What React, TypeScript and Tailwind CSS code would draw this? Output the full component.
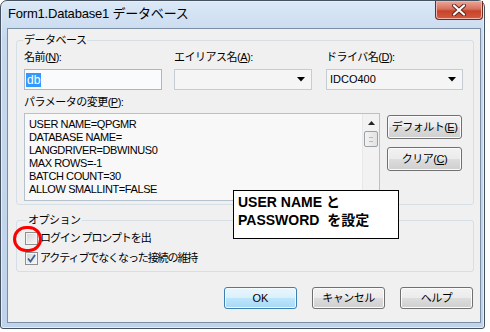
const jp = "font-['Liberation_Sans','Noto_Sans_CJK_JP',sans-serif]";

function Btn({ label, className = "" }: { label: React.ReactNode; className?: string }) {
  return (
    <div
      className={`flex items-center justify-center rounded-[3px] border border-[#707070] bg-[linear-gradient(#f2f2f2_0%,#ebebeb_50%,#dddddd_50%,#cfcfcf_100%)] shadow-[inset_0_0_0_1px_#fbfbfb] text-[11px] tracking-[-0.5px] text-black ${jp} ${className}`}
    >
      {label}
    </div>
  );
}

function Acc({ k }: { k: string }) {
  return <span className="underline">{k}</span>;
}

function Check({ checked }: { checked?: boolean }) {
  return (
    <div className="flex h-[13px] w-[13px] shrink-0 items-center justify-center border border-[#8f8f8f] bg-[linear-gradient(135deg,#d6d6d6,#f8f8f8)] shadow-[inset_0_0_0_1px_#f4f4f4]">
      {checked && (
        <svg width="9" height="9" viewBox="0 0 9 9">
          <path d="M1 4.5 L3.5 7.5 L8 1" fill="none" stroke="#3f5d96" strokeWidth="1.8" />
        </svg>
      )}
    </div>
  );
}

function Combo({ value }: { value?: string }) {
  return (
    <div className="flex h-[21px] items-center justify-between border border-[#c6ccd4] bg-[#f5f5f5] pl-[3px] pr-[6px]">
      <span className="font-['Liberation_Sans',sans-serif] text-[11px] text-black">{value}</span>
      <svg width="8" height="5" viewBox="0 0 8 5">
        <path d="M0 0 H8 L4 4.5 Z" fill="#000" />
      </svg>
    </div>
  );
}

const params = [
  "USER NAME=QPGMR",
  "DATABASE NAME=",
  "LANGDRIVER=DBWINUS0",
  "MAX ROWS=-1",
  "BATCH COUNT=30",
  "ALLOW SMALLINT=FALSE",
];

export default function App() {
  return (
    <div className="relative h-[332px] w-[490px] bg-white">
      <div className="flex h-[329px] w-[485px] flex-col rounded-t-[7px] rounded-b-[3px] border border-[#46525f] bg-[linear-gradient(180deg,#dbe8f6_0%,#c5d8ee_12%,#bfd3ea_100%)] pl-[6px] shadow-[inset_0_0_0_1px_#e6eef8]">
        {/* title bar */}
        <div className="flex h-[27px] items-start justify-between">
          <div className={`mt-[4px] ml-[1px] text-[13px] leading-[18px] tracking-[-0.2px] text-black ${jp}`}>
            Form1.Database1 データベース
          </div>
          <div className="mr-[1px] flex h-[19px] w-[48px] items-center justify-center rounded-b-[4px] border border-t-0 border-[#6e2b22] bg-[linear-gradient(180deg,#e9a79a_0%,#d8705c_45%,#c7432c_55%,#d65b3d_100%)] shadow-[inset_0_0_0_1px_#f0b8ac]">
            <svg width="16" height="12" viewBox="0 0 16 12">
              <path d="M3 1.5 L13 10.5 M13 1.5 L3 10.5" stroke="#5a2119" strokeWidth="4" strokeLinecap="round" />
              <path d="M3 1.5 L13 10.5 M13 1.5 L3 10.5" stroke="#ffffff" strokeWidth="2.2" strokeLinecap="round" />
            </svg>
          </div>
        </div>

        {/* client */}
        <div className="flex h-[295px] w-[474px] flex-col border border-[#7c8ea3] bg-[#f0f0f0]">
          <fieldset className="mt-[5px] ml-[8px] h-[171px] w-[458px] rounded-[3px] border border-[#d5dfe5] px-[7px]">
            <legend className={`px-[1px] -ml-[1px] text-[11px] leading-[12px] tracking-[-0.5px] text-black ${jp}`}>データベース</legend>
            <div className="mt-[4px] flex">
              <div className="w-[138px]">
                <div className={`h-[14px] text-[11px] leading-[14px] tracking-[-0.5px] ${jp}`}>
                  名前(<Acc k="N" />):
                </div>
                <div className="mt-[5px] flex h-[21px] items-center border border-[#abb7c4] bg-[#fafbfc] px-[1px]">
                  <span className="bg-[#3399ff] px-[1px] font-['Liberation_Sans',sans-serif] text-[12px] leading-[14px] text-white">db</span>
                </div>
              </div>
              <div className="ml-[12px] w-[138px]">
                <div className={`h-[14px] text-[11px] leading-[14px] tracking-[-0.5px] ${jp}`}>
                  エイリアス名(<Acc k="A" />):
                </div>
                <div className="mt-[5px]">
                  <Combo />
                </div>
              </div>
              <div className="ml-[14px] w-[137px]">
                <div className={`h-[14px] text-[11px] leading-[14px] tracking-[-0.5px] ${jp}`}>
                  ドライバ名(<Acc k="D" />):
                </div>
                <div className="mt-[5px]">
                  <Combo value="IDCO400" />
                </div>
              </div>
            </div>
            <div className={`mt-[5px] h-[14px] text-[11px] leading-[14px] tracking-[-0.5px] ${jp}`}>
              パラメータの変更(<Acc k="P" />):
            </div>
            <div className="mt-[4px] flex">
              <div className="flex h-[88px] w-[356px] border border-[#b5c1cd] bg-[#f8f8f8]">
                <div className="flex-1 pt-[4px] pl-[4px] font-['Liberation_Sans',sans-serif] text-[11px] leading-[13px] tracking-[-0.4px] text-black">
                  {params.map((p) => (
                    <div key={p}>{p}</div>
                  ))}
                </div>
                <div className="flex w-[17px] flex-col items-center border-l border-[#e8e8e8] bg-[#f2f2f2]">
                  <div className="flex h-[17px] items-center justify-center">
                    <svg width="7" height="4" viewBox="0 0 7 4">
                      <path d="M0 4 L3.5 0 L7 4 Z" fill="#222" />
                    </svg>
                  </div>
                  <div className="flex h-[16px] w-[14px] items-center justify-center rounded-[2px] border border-[#9aa0a6] bg-[linear-gradient(90deg,#f3f3f3,#e2e2e2)]">
                    <div className="h-[5px] w-[4px] border-y border-[#b8b8b8]" />
                  </div>
                </div>
              </div>
              <div className="ml-[7px] mt-[2px] flex flex-col gap-[8px]">
                <Btn className="h-[24px] w-[75px]" label={<>デフォルト(<Acc k="E" />)</>} />
                <Btn className="h-[24px] w-[75px]" label={<>クリア(<Acc k="C" />)</>} />
              </div>
            </div>
          </fieldset>

          <fieldset className="mt-[9px] ml-[8px] w-[458px] rounded-[3px] border border-[#d5dfe5] px-[8px] pb-[5px]">
            <legend className={`ml-[2px] px-[1px] text-[11px] leading-[12px] tracking-[-0.5px] text-black ${jp}`}>オプション</legend>
            <div className="mt-[4px] flex h-[16px] items-center gap-[2px]">
              <Check />
              <span className={`whitespace-nowrap text-[11px] tracking-[-1.1px] ${jp}`}>ログイン プロンプトを出</span>
            </div>
            <div className="mt-[4px] flex h-[16px] items-center gap-[2px]">
              <Check checked />
              <span className={`whitespace-nowrap text-[11px] tracking-[-1.1px] ${jp}`}>アクティブでなくなった接続の維持</span>
            </div>
          </fieldset>

          <div className="mt-[15px] flex justify-end gap-[15px] pr-[7px]">
            <div className="flex h-[22px] w-[73px] items-center justify-center rounded-[3px] border border-[#3c7fb1] bg-[linear-gradient(#eaf6fd_0%,#d9f0fc_50%,#bee6fd_50%,#a7d9f5_100%)] font-['Liberation_Sans',sans-serif] text-[11px] text-black shadow-[inset_0_0_0_1px_#f4fbff]">
              OK
            </div>
            <Btn className="h-[22px] w-[73px]" label="キャンセル" />
            <Btn className="h-[22px] w-[73px]" label="ヘルプ" />
          </div>
        </div>
      </div>

      {/* annotation callout */}
      <div className="absolute left-[233px] top-[190px] h-[49px] w-[166px] border border-black bg-white pl-[4px] pt-[2px] font-['Liberation_Sans','Noto_Sans_CJK_JP',sans-serif] text-[14px] font-bold leading-[18px] text-black">
        <div>USER NAME と</div>
        <div className="whitespace-pre">PASSWORD  を設定</div>
      </div>
      {/* red marker circle */}
      <div className="absolute left-[13px] top-[226px] h-[26px] w-[29px] rounded-full border-[3px] border-[#ff0000]" />
    </div>
  );
}
